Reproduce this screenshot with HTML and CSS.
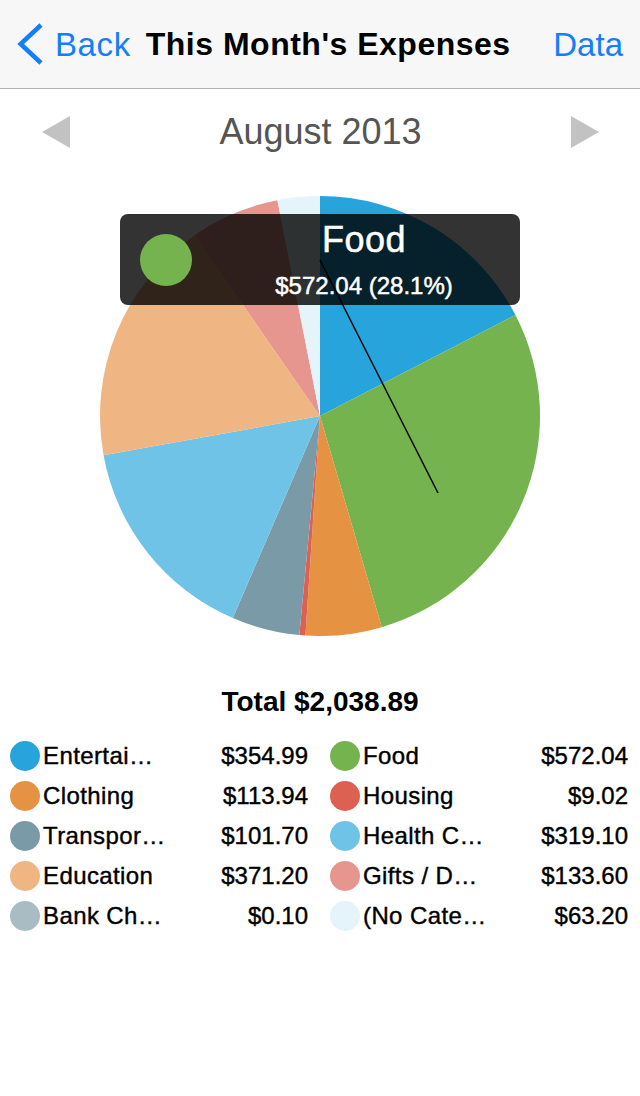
FILE: index.html
```html
<!DOCTYPE html>
<html lang="en">
<head>
    <meta charset="UTF-8">
    <meta name="viewport" content="width=device-width, initial-scale=1.0">
    <title>This Month's Expenses</title>
    <link rel="stylesheet" href="styles.css">
</head>
<body>
    <div class="navbar">
        <a class="nav-back" href="#">
            <svg class="chevron" width="30" height="42" viewBox="0 0 30 42">
                <polyline points="27,2 6.6,21 27,40" fill="none" stroke="#147efb" stroke-width="4.5"/>
            </svg>
            <span>Back</span>
        </a>
        <div class="nav-title">This Month's Expenses</div>
        <a class="nav-action" href="#">Data</a>
    </div>

    <div class="month-row">
        <span class="arrow arrow-left"></span>
        <span class="month">August 2013</span>
        <span class="arrow arrow-right"></span>
    </div>

    <div class="chart">
        <svg class="pie" width="440" height="440" viewBox="0 0 440 440">
            <path fill="#27a4dc" d="M220 220 L220 0 A220 220 0 0 1 415.46 119.02 Z"/>
            <path fill="#75b34f" d="M220 220 L415.46 119.02 A220 220 0 0 1 281.81 431.14 Z"/>
            <path fill="#e69243" d="M220 220 L281.81 431.14 A220 220 0 0 1 205.42 439.52 Z"/>
            <path fill="#dc6152" d="M220 220 L205.42 439.52 A220 220 0 0 1 199.32 439.03 Z"/>
            <path fill="#7a9aa7" d="M220 220 L199.32 439.03 A220 220 0 0 1 132.80 421.98 Z"/>
            <path fill="#6ec3e6" d="M220 220 L132.80 421.98 A220 220 0 0 1 3.55 259.37 Z"/>
            <path fill="#efb683" d="M220 220 L3.55 259.37 A220 220 0 0 1 94.55 39.27 Z"/>
            <path fill="#e6968e" d="M220 220 L94.55 39.27 A220 220 0 0 1 177.36 4.17 Z"/>
            <path fill="#a9bcc4" d="M220 220 L177.36 4.17 A220 220 0 0 1 177.42 4.16 Z"/>
            <path fill="#e5f3fa" d="M220 220 L177.42 4.16 A220 220 0 0 1 220 0 Z"/>
        </svg>

        <div class="tooltip">
            <span class="tooltip-dot"></span>
            <div class="tooltip-text">
                <div class="tooltip-title">Food</div>
                <div class="tooltip-value">$572.04 (28.1%)</div>
            </div>
        </div>

        <svg class="leader" width="640" height="440" viewBox="0 0 640 440">
            <line x1="320" y1="64" x2="438" y2="297" stroke="#000" stroke-width="1.5"/>
        </svg>
    </div>

    <div class="total">Total $2,038.89</div>

    <div class="legend">
        <div class="legend-item"><span class="dot c-entertainment"></span><span class="name">Entertai…</span><span class="amount">$354.99</span></div>
        <div class="legend-item"><span class="dot c-food"></span><span class="name">Food</span><span class="amount">$572.04</span></div>
        <div class="legend-item"><span class="dot c-clothing"></span><span class="name">Clothing</span><span class="amount">$113.94</span></div>
        <div class="legend-item"><span class="dot c-housing"></span><span class="name">Housing</span><span class="amount">$9.02</span></div>
        <div class="legend-item"><span class="dot c-transport"></span><span class="name">Transpor…</span><span class="amount">$101.70</span></div>
        <div class="legend-item"><span class="dot c-health"></span><span class="name">Health C…</span><span class="amount">$319.10</span></div>
        <div class="legend-item"><span class="dot c-education"></span><span class="name">Education</span><span class="amount">$371.20</span></div>
        <div class="legend-item"><span class="dot c-gifts"></span><span class="name">Gifts / D…</span><span class="amount">$133.60</span></div>
        <div class="legend-item"><span class="dot c-bank"></span><span class="name">Bank Ch…</span><span class="amount">$0.10</span></div>
        <div class="legend-item"><span class="dot c-none"></span><span class="name">(No Cate…</span><span class="amount">$63.20</span></div>
    </div>
</body>
</html>
```

FILE: styles.css
```css
body {
    margin: 0;
    font-family: "Liberation Sans", Arial, sans-serif;
    color: #000;
    background-color: #fff;
}
.navbar {
    display: flex;
    align-items: center;
    height: 88px;
    padding: 0 17px 0 14px;
    background-color: #f7f7f7;
    border-bottom: 1px solid #b2b2b2;
}
.nav-back {
    display: flex;
    align-items: center;
    color: #147efb;
    text-decoration: none;
    font-size: 33px;
    line-height: 1;
}
.nav-back span {
    letter-spacing: 0.6px;
}
.chevron {
    display: block;
    margin-right: 11px;
}
.nav-title {
    margin-left: 15px;
    font-size: 32px;
    font-weight: bold;
    letter-spacing: 0.5px;
    line-height: 1;
}
.nav-action {
    margin-left: auto;
    color: #147efb;
    text-decoration: none;
    font-size: 33px;
    line-height: 1;
}
.month-row {
    display: flex;
    align-items: center;
    justify-content: space-between;
    height: 86px;
    padding: 0 41px 0 42px;
}
.arrow {
    width: 0;
    height: 0;
    border-top: 16px solid transparent;
    border-bottom: 16px solid transparent;
}
.arrow-left {
    border-right: 28px solid #c2c2c2;
}
.arrow-right {
    border-left: 28px solid #c2c2c2;
}
.month {
    font-size: 36px;
    line-height: 1;
    color: #555;
}
.chart {
    position: relative;
    height: 440px;
    margin-top: 21px;
}
.pie {
    display: block;
    margin: 0 auto;
}
.tooltip {
    position: absolute;
    left: 120px;
    top: 18px;
    width: 400px;
    height: 91px;
    box-sizing: border-box;
    display: flex;
    align-items: center;
    padding-left: 20px;
    background-color: rgba(0, 0, 0, 0.8);
    border-radius: 8px;
    color: #fff;
}
.tooltip-dot {
    width: 52px;
    height: 52px;
    border-radius: 50%;
    background-color: #75b34f;
    flex-shrink: 0;
}
.tooltip-text {
    flex: 1;
    align-self: flex-start;
    padding: 8px 0 0 16px;
    text-align: center;
    -webkit-text-stroke: 0.5px #fff;
}
.tooltip-title {
    font-size: 36px;
    line-height: 36px;
    letter-spacing: 0.5px;
}
.tooltip-value {
    margin-top: 16px;
    font-size: 24px;
    line-height: 24px;
}
.leader {
    position: absolute;
    left: 0;
    top: 0;
}
.total {
    margin-top: 52px;
    text-align: center;
    font-size: 28px;
    font-weight: bold;
    line-height: 28px;
}
.legend {
    display: grid;
    grid-template-columns: 1fr 1fr;
    column-gap: 22px;
    margin-top: 20px;
    padding: 0 12px 0 10px;
}
.legend-item {
    display: flex;
    align-items: center;
    height: 40px;
    font-size: 24px;
    -webkit-text-stroke: 0.4px #000;
}
.dot {
    width: 30px;
    height: 30px;
    border-radius: 50%;
    margin-right: 3px;
    flex-shrink: 0;
}
.name {
    flex: 1;
    white-space: nowrap;
    letter-spacing: 0.4px;
}
.amount {
    text-align: right;
}
.c-entertainment { background-color: #27a4dc; }
.c-food { background-color: #75b34f; }
.c-clothing { background-color: #e69243; }
.c-housing { background-color: #dc6152; }
.c-transport { background-color: #7a9aa7; }
.c-health { background-color: #6ec3e6; }
.c-education { background-color: #efb683; }
.c-gifts { background-color: #e6968e; }
.c-bank { background-color: #a9bcc4; }
.c-none { background-color: #e5f3fa; }
```
